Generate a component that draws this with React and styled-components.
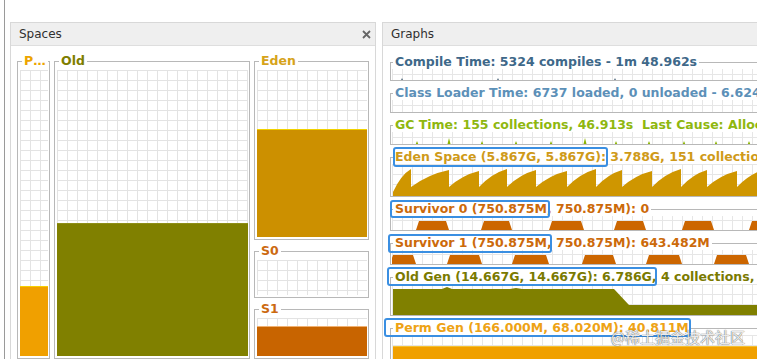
import React from 'react';
import styled, { createGlobalStyle } from 'styled-components';

const Global = createGlobalStyle`
  html, body { margin: 0; padding: 0; background: #fff; }
  body { font-family: "DejaVu Sans", "Liberation Sans", sans-serif; overflow: hidden; }
`;

const Root = styled.div`
  position: relative;
  box-sizing: border-box;
  width: 753px;
  height: 359px;
  margin-left: 4px;
  border-left: 1px solid #9a9a9a;
  padding: 22px 0 0 5px;
  display: flex;
  gap: 6px;
  overflow: hidden;
`;

const Panel = styled.section`
  flex: 0 0 ${(p) => p.$w}px;
  box-sizing: border-box;
  display: flex;
  flex-direction: column;
  border: 1px solid #d8d8d8;
  border-bottom: none;
  ${(p) => (p.$open ? 'border-right: none;' : '')}
  background: #fff;
  min-width: 0;
`;

const Header = styled.header`
  height: 22px;
  flex: 0 0 22px;
  display: flex;
  align-items: center;
  justify-content: space-between;
  padding: 0 4px 0 8px;
  background: #efefef;
  border-bottom: 1px solid #dedede;
  font-size: 12px;
  color: #303030;
`;

const Close = styled.svg`
  width: 9px;
  height: 9px;
`;

const SpacesBody = styled.div`
  display: flex;
  gap: 4px;
  height: 308px;
  padding: 8px 6px 0 6px;
`;

const Column = styled.div`
  flex: 0 0 115px;
  display: flex;
  flex-direction: column;
  gap: 4px;
`;

const Frame = styled.fieldset`
  margin: 0;
  padding: 2px 1px 2px 2px;
  border: 1px solid #b8b8b8;
  min-width: 0;
  box-sizing: border-box;
  display: flex;
  flex-direction: column;
  flex: ${(p) => (p.$h ? `0 0 ${p.$h}px` : p.$w ? `0 0 ${p.$w}px` : '1 1 0')};
`;

const FrameLegend = styled.legend`
  margin-left: 2px;
  padding: 0 2px;
  font-weight: bold;
  font-size: 12.5px;
  line-height: 14px;
  color: ${(p) => p.$c};
  white-space: nowrap;
`;

const Grid = styled.div`
  flex: 1;
  display: flex;
  flex-direction: column;
  justify-content: flex-end;
  background-color: #fff;
  background-image: linear-gradient(#e3e3e3 1px, transparent 1px),
    linear-gradient(90deg, #e3e3e3 1px, transparent 1px);
  background-size: 10px 10px;
`;

const Fill = styled.div`
  height: ${(p) => p.$pct}%;
  box-sizing: border-box;
  background: ${(p) => p.$c};
  border-top: 1px solid ${(p) => p.$edge};
`;

const GraphsBody = styled.div`
  display: flex;
  flex-direction: column;
  gap: 5px;
  padding: 9px 0 0 7px;
`;

const Row = styled.fieldset`
  margin: 0;
  padding: 0 0 0 1px;
  border: 1px solid #b8b8b8;
  border-right: none;
  min-width: 0;
`;

const RowLegend = styled.legend`
  margin-left: 1px;
  padding: 0 2px;
  font-weight: bold;
  font-size: 12.5px;
  line-height: 14px;
  color: ${(p) => p.$c};
  white-space: pre;
`;

const Chart = styled.div`
  height: ${(p) => p.$h}px;
  overflow: hidden;
  background-color: #fff;
  background-image: linear-gradient(#e6e6e6 1px, transparent 1px),
    linear-gradient(90deg, #e6e6e6 1px, transparent 1px);
  background-size: 10px 10px;
  background-position: 0 ${(p) => p.$off || 0}px;
`;

const Mark = styled.span`
  position: relative;
  &::after {
    content: '';
    position: absolute;
    left: -${(p) => p.$l}px;
    right: -${(p) => p.$r}px;
    top: -${(p) => p.$t}px;
    bottom: -${(p) => p.$b}px;
    border: 2px solid #3a8fe2;
    border-radius: 3px;
    pointer-events: none;
  }
`;

const Watermark = styled.div`
  position: absolute;
  right: 12px;
  bottom: 13px;
  font-family: "Noto Sans CJK SC", "DejaVu Sans", sans-serif;
  font-size: 15px;
  line-height: 18px;
  color: rgba(255, 255, 255, 0.9);
  text-shadow: 0 0 1px rgba(60, 60, 60, 0.8), 0 0 1px rgba(60, 60, 60, 0.6);
  pointer-events: none;
`;

const C = {
  compile: '#3e6889',
  loader: '#5c90b8',
  gc: '#8fb70f',
  eden: '#cf9a19',
  surv: '#cc6a0a',
  old: '#7a7a00',
  perm: '#eea315',
};

const teeth = [19, 57, 87, 115, 144, 175, 204, 230, 260, 289, 315, 345, 374];

function sawPath(h) {
  let d = `M1,${h} L1,${h - 4}`;
  let prev = 1;
  let low = h - 4;
  teeth.forEach((x, i) => {
    const peak = 5 + (i % 3);
    const cx = prev + (x - prev) * 0.45;
    const cy = peak + (low - peak) * 0.25;
    d += ` Q${cx},${cy} ${x},${peak} L${x},${h - 9}`;
    prev = x;
    low = h - 9;
  });
  d += ` L400,${h - 18} L400,${h} Z`;
  return d;
}

const trap = (a, b, h) =>
  `M${a},${h - 1} L${a + 3},${h - 10} L${b - 3},${h - 10} L${b},${h - 1} Z`;

const s0 = [[24, 57], [89, 120], [157, 192], [222, 254], [290, 322], [357, 390]];
const s1 = [[-2, 24], [55, 90], [120, 157], [190, 224], [254, 290], [322, 357]];

const compileTicks = [10, 106, 223];
const gcTicks = [25, 57, 90, 124, 159, 193, 224, 257, 292, 324, 357];
const gcTall = [57, 193];

function Ticks({ xs, h, color, tall = [] }) {
  return xs.map((x) => {
    const th = tall.includes(x) ? 8 : 5;
    return (
      <polygon
        key={x}
        points={`${x - 2},${h - 1} ${x},${h - 1 - th} ${x + 2},${h - 1}`}
        fill={color}
      />
    );
  });
}

function Spaces() {
  return (
    <Panel $w={366}>
      <Header>
        <span>Spaces</span>
        <Close viewBox="0 0 9 9">
          <path d="M1 1 L8 8 M8 1 L1 8" stroke="#666" strokeWidth="1.8" />
        </Close>
      </Header>
      <SpacesBody>
        <Frame $w={33}>
          <FrameLegend $c="#eca400">P…</FrameLegend>
          <Grid>
            <Fill $pct={24.5} $c="#f0a000" $edge="#f8cf00" />
          </Grid>
        </Frame>
        <Frame $w={196}>
          <FrameLegend $c="#7e7e00">Old</FrameLegend>
          <Grid>
            <Fill $pct={46.5} $c="#808000" $edge="#8f8f18" />
          </Grid>
        </Frame>
        <Column>
          <Frame>
            <FrameLegend $c="#d6a31a">Eden</FrameLegend>
            <Grid>
              <Fill $pct={64.5} $c="#cc9000" $edge="#f2d200" />
            </Grid>
          </Frame>
          <Frame $h={54}>
            <FrameLegend $c="#cc6a10">S0</FrameLegend>
            <Grid />
          </Frame>
          <Frame $h={57}>
            <FrameLegend $c="#cc6a10">S1</FrameLegend>
            <Grid>
              <Fill $pct={80} $c="#c86400" $edge="#f0b070" />
            </Grid>
          </Frame>
        </Column>
      </SpacesBody>
    </Panel>
  );
}

function Graphs() {
  return (
    <Panel $w={420} $open>
      <Header>
        <span>Graphs</span>
      </Header>
      <GraphsBody>
        <Row>
          <RowLegend $c={C.compile}>Compile Time: 5324 compiles - 1m 48.962s</RowLegend>
          <Chart $h={11} $off={5}>
            <svg width="400" height="11">
              <Ticks xs={compileTicks} h={11} color="#27465e" />
            </svg>
          </Chart>
        </Row>
        <Row>
          <RowLegend $c={C.loader}>Class Loader Time: 6737 loaded, 0 unloaded - 6.624s</RowLegend>
          <Chart $h={12} $off={5} />
        </Row>
        <Row>
          <RowLegend $c={C.gc}>GC Time: 155 collections, 46.913s  Last Cause: Allocation Failure</RowLegend>
          <Chart $h={12} $off={5}>
            <svg width="400" height="12">
              <Ticks xs={gcTicks} h={12} color="#8cb400" tall={gcTall} />
            </svg>
          </Chart>
        </Row>
        <Row>
          <RowLegend $c={C.eden}>
            <Mark $l={2} $r={2} $t={2} $b={3}>Eden Space (5.867G, 5.867G):</Mark> 3.788G, 151 collections, 42.170s
          </RowLegend>
          <Chart $h={32}>
            <svg width="400" height="32">
              <path d={sawPath(32)} fill="#cf9600" />
            </svg>
          </Chart>
        </Row>
        <Row>
          <RowLegend $c={C.surv}>
            <Mark $l={5} $r={3} $t={1} $b={2}>Survivor 0 (750.875M</Mark>, 750.875M): 0
          </RowLegend>
          <Chart $h={14} $off={4}>
            <svg width="400" height="14">
              {s0.map(([a, b]) => (
                <path key={a} d={trap(a, b, 14)} fill="#cc6600" />
              ))}
            </svg>
          </Chart>
        </Row>
        <Row>
          <RowLegend $c={C.surv}>
            <Mark $l={7} $r={0} $t={1} $b={3}>Survivor 1 (750.875M,</Mark> 750.875M): 643.482M
          </RowLegend>
          <Chart $h={14} $off={4}>
            <svg width="400" height="14">
              {s1.map(([a, b]) => (
                <path key={a} d={trap(a, b, 14)} fill="#cc6600" />
              ))}
            </svg>
          </Chart>
        </Row>
        <Row>
          <RowLegend $c={C.old}>
            <Mark $l={8} $r={0} $t={2} $b={2}>Old Gen (14.667G, 14.667G): 6.786G,</Mark> 4 collections, 1.743s
          </RowLegend>
          <Chart $h={31}>
            <svg width="400" height="31">
              <path
                d="M1,31 L1,5 L50,5 L55,3 L60,5 L118,5 L124,4 L130,5 L222,5 L237,21 L400,21 L400,31 Z"
                fill="#808000"
              />
            </svg>
          </Chart>
        </Row>
        <Row>
          <RowLegend $c={C.perm}>
            <Mark $l={11} $r={2} $t={2} $b={2}>Perm Gen (166.000M, 68.020M): 40.811M</Mark>
          </RowLegend>
          <Chart $h={30}>
            <svg width="400" height="30">
              <rect x="1" y="11" width="400" height="19" fill="#f0a000" />
              <rect x="1" y="11" width="400" height="1" fill="#f6c030" />
            </svg>
          </Chart>
        </Row>
      </GraphsBody>
    </Panel>
  );
}

export default function App() {
  return (
    <>
      <Global />
      <Root>
        <Spaces />
        <Graphs />
        <Watermark>@稀土掘金技术社区</Watermark>
      </Root>
    </>
  );
}
